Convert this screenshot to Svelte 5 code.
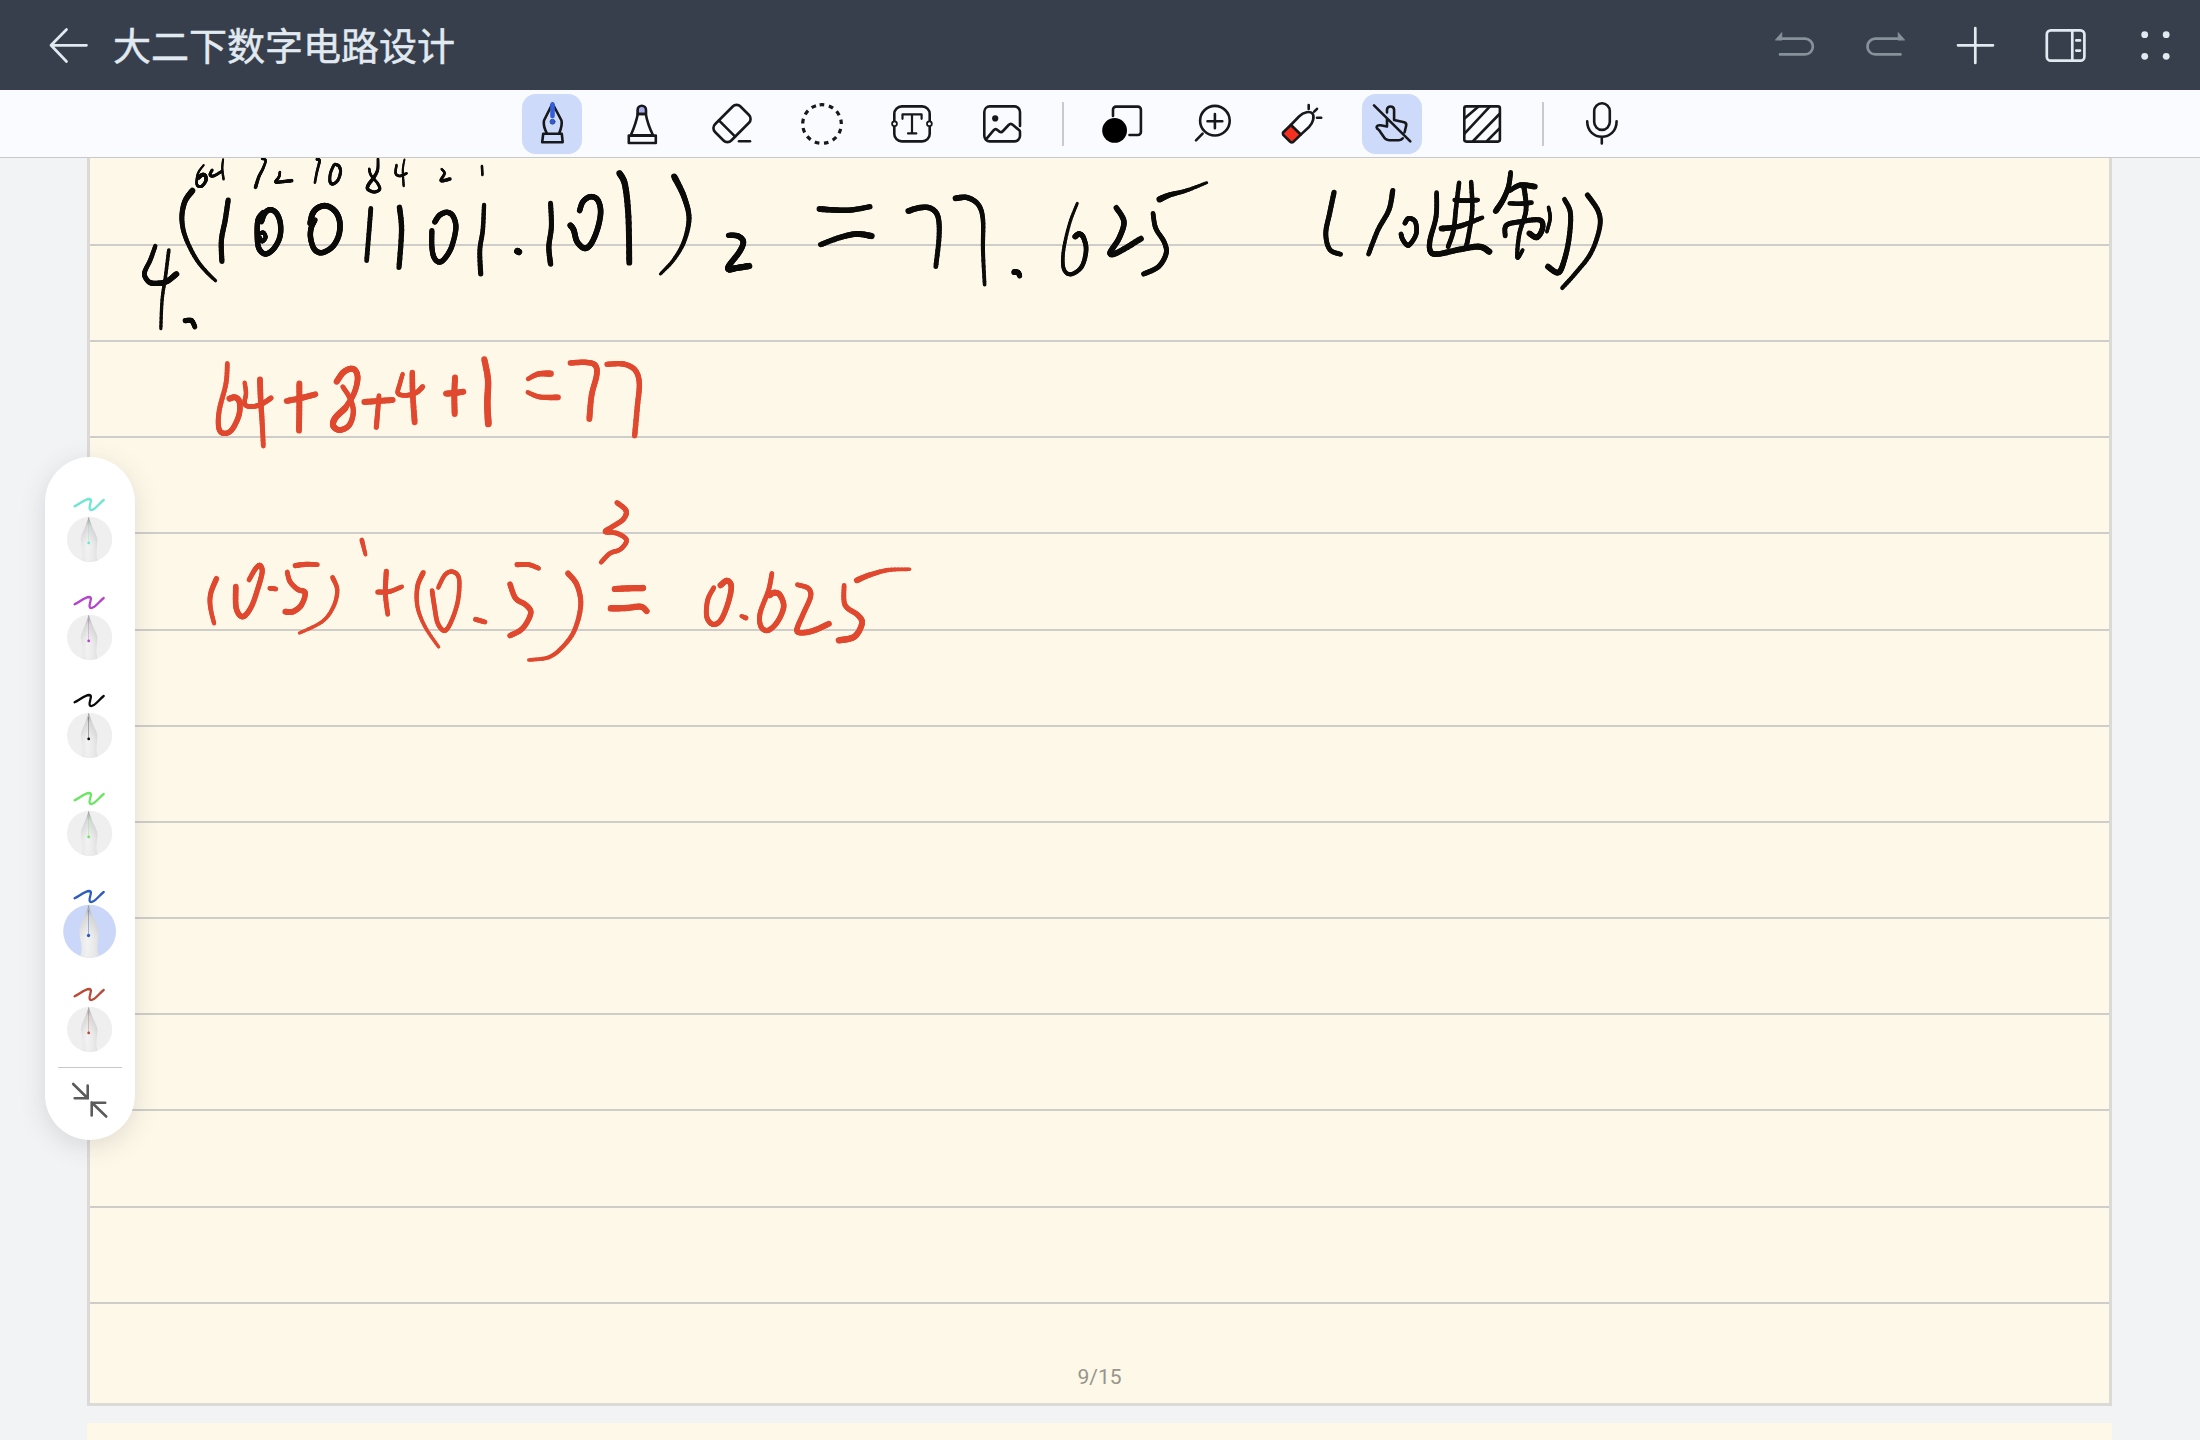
<script>
  // Pen strokes captured per writing block: origin, sampling scale, and for each
  // stroke "startWidth endWidth | x,y x,y ...".
  const blocks = [
    {
      ox: 120, oy: 150, sx: 2.376, sy: 3, color: '#0b0b0a',
      strokes: [
        '1.6 3.4|199,45 186,68 182,95 185,108 195,108 204,92 203,78 196,74 186,84',
        '2.4 2.4|219,60 214,74 222,78 242,64',
        '1.6 2|245,28 243,55 246,88',
        '1.6 3|337,27 346,31 340,55 330,80 322,112',
        '2 3|380,66 378,80 370,96 386,95 408,92',
        '2.4 2|468,28 474,33 468,65 463,98',
        '2.4 2.6|508,45 500,70 499,95 506,102 518,90 524,65 520,48 511,43',
        '2 3|592,56 596,75 612,100 617,118 604,126 589,118 590,105 602,85',
        '3 2|602,85 612,60 613,26',
        '2 2.2|657,45 655,70 665,78 681,70',
        '1.4 2|676,28 672,60 674,108',
        '1.8 3|764,57 771,70 763,92 784,87',
        '2 2|860,48 861,75',
        '5 2.6|172,122 154,155 147,205 155,260 180,325 205,365 227,392',
        '4.4 4.4|257,150 250,210 241,270 242,334',
        '4.6 4.6|340,188 328,210 326,255 330,295 346,312 366,295 380,260 381,220 372,190 357,179 344,190 336,215',
        '3.4 3.4|333,250 341,248 346,262 338,274 332,262',
        '5 4.6|452,220 458,190 472,172 492,168 512,185 522,215 520,255 505,290 480,308 462,298 453,265 454,235 463,210',
        '4 4|596,175 592,240 586,332',
        '4.6 4.4|664,172 669,240 663,352',
        '4.6 4.4|748,216 760,195 778,187 792,200 798,235 788,290 772,325 758,336 746,322 741,290 741,242',
        '3.6 4.4|865,165 862,240 855,300 857,372',
        '5.4 5.4|944,303 948,306',
        '4.2 4.6|1023,160 1025,230 1019,290 1023,342',
        '4.6 5|1092,182 1100,155 1118,140 1135,150 1142,185 1135,235 1120,280 1104,295 1086,275 1078,240 1070,226',
        '5.4 5|1187,70 1200,105 1208,200 1210,338',
        '5.4 2.4|1317,80 1340,140 1352,205 1340,275 1315,330 1284,372',
        '4.6 5.4|1446,256 1468,258 1481,275 1472,305 1448,345 1447,358 1465,354 1495,348',
        '3.6 5|84,288 72,330 58,370 68,395 85,400 110,395 134,372',
        '3 2.6|116,300 108,380 100,450 97,536',
        '4.4 4|155,512 170,512 178,531',
      ],
    },
    {
      ox: 780, oy: 150, sx: 1.823, sy: 3, color: '#0b0b0a',
      strokes: [
        '5 4.4|72,177 100,180 130,180 164,170',
        '4.4 5.4|74,284 110,262 140,252 167,258',
        '5 4|234,183 255,173 275,175 288,200 290,260 284,350',
        '5 3|320,145 342,143 362,165 370,210 370,300 373,404',
        '5 4|427,366 434,368 437,378',
        '2.4 4.8|542,160 528,220 517,300 517,355 530,373 550,350 558,300 553,262 545,252 538,260',
        '4.6 5|613,173 627,215 618,265 602,308 615,308 658,266',
        '4 4.4|680,190 685,235 700,275 704,310 690,350 663,372',
        '5.4 2.2|692,148 710,135 740,122 778,98',
        '4.4 4|1010,127 1002,190 995,250 1002,298 1022,313',
        '4.4 4|1117,122 1110,180 1090,240 1073,312',
        '4 4|1139,220 1146,205 1158,215 1160,250 1150,280 1143,285 1135,268 1132,252',
        '4 5.4|1197,128 1196,200 1185,270 1186,305 1200,312 1240,298 1275,290 1293,305',
        '3.8 4|1238,98 1232,180 1228,240 1218,290',
        '3.8 4|1260,96 1262,180 1256,250 1251,290',
        '4 4|1230,150 1250,152 1272,150',
        '5 3.6|1206,236 1240,228 1280,203',
        '4 5|1332,67 1328,110 1318,150 1305,183',
        '4 5|1330,122 1350,105 1376,110',
        '3.6 4|1330,160 1350,161 1370,158',
        '4 4.8|1322,258 1324,226 1350,215 1385,210 1390,235 1380,262 1366,250',
        '4.4 3|1356,108 1360,180 1348,250 1344,322 1354,300',
        '3 3|1401,172 1404,205 1398,245',
        '4 5|1430,148 1441,190 1438,270 1428,340 1418,368 1400,350',
        '4.4 3.4|1472,135 1492,185 1494,235 1478,310 1450,370 1426,414',
      ],
    },
    {
      ox: 190, oy: 340, sx: 3, sy: 3, color: '#e0492f',
      strokes: [
        '4 5|112,70 108,130 88,210 86,262 100,280 125,270 147,225 148,185 135,172 118,176',
        '3.6 4.4|164,128 168,160 164,192 185,200 215,192 243,174',
        '5 4|210,118 212,180 216,240 220,318',
        '5 5|290,183 330,175 376,163',
        '5 5|328,130 328,200 327,272',
        '4 5.6|458,140 480,175 490,215 478,255 450,270 430,258 435,235 465,205',
        '4.6 5.2|465,205 490,165 502,125 500,98 485,86 460,97 440,125',
        '5 5|523,186 565,183 608,180',
        '4 4.4|567,167 563,215 559,262',
        '3.6 4.4|638,102 630,130 624,160 650,166 680,157 698,140',
        '4.6 5|667,97 668,160 674,247',
        '5 5|768,161 795,159 820,155',
        '5 5|795,112 793,165 794,222',
        '5.2 5.8|883,58 894,120 892,190 895,252',
        '3.6 5.6|1014,117 1045,102 1082,101',
        '3.6 5|1013,157 1050,171 1104,172',
        '4.6 5|1141,69 1185,67 1215,75 1220,105 1205,165 1198,237',
        '4.6 4.6|1251,73 1300,72 1335,90 1348,130 1342,200 1334,287',
      ],
    },
    {
      ox: 190, oy: 490, sx: 2.119, sy: 3, color: '#e0492f',
      strokes: [
        '4.6 3.6|56,266 44,310 43,350 51,400',
        '4 4.8|125,270 138,238 148,226 153,245 145,290 130,350 112,380 98,355 97,290',
        '4 4|169,295 182,297',
        '4 5|206,246 212,275 228,298 244,308 236,345 218,365 202,365',
        '4.4 4|223,227 245,223 270,224',
        '4 2.6|302,262 312,300 304,350 280,395 232,429',
        '4 3|364,150 372,194',
        '4.4 3.6|398,306 422,305 449,290',
        '4.4 4|416,244 414,310 419,373',
        '4.4 2.6|494,248 482,290 482,350 498,410 527,471',
        '3.6 4|526,293 540,255 556,245 570,265 568,330 555,390 540,422 525,400 518,350 513,302',
        '4.2 4|605,388 625,396',
        '4.6 4.6|678,282 690,325 712,345 722,370 705,415 678,437',
        '4.4 3.8|693,224 718,224 739,235',
        '4.8 3|801,250 820,285 828,345 815,420 790,470 760,502 718,510',
        '4.4 3.8|905,38 924,62 918,88 895,110 880,125 905,130 925,150 912,178 890,190 871,217',
        '5.2 5.4|900,297 930,295 960,294',
        '5.6 4.8|892,355 925,354 955,350 968,364',
        '4 5|1110,293 1097,330 1095,380 1108,403 1125,390 1140,340 1147,290 1138,272 1124,286',
        '3 4.4|1168,378 1178,384',
        '4 5|1233,250 1226,300 1208,370 1210,410 1225,421 1245,395 1258,350 1250,315 1238,308 1228,316',
        '4 5|1287,284 1310,295 1315,320 1300,370 1286,420 1300,428 1325,420 1354,401',
        '4 5.6|1386,286 1388,345 1415,375 1424,400 1408,440 1375,451',
        '5 2.8|1413,271 1440,255 1480,240 1525,238',
      ],
    },
  ];

  // Catmull-Rom sampling of the pen points with a linear pressure ramp.
  function sample(block, source) {
    const [widths, pts] = source.split('|');
    const [w0, w1] = widths.split(' ').map((w) => Number(w) * 1.12 + 0.25);
    const p = pts.split(' ').map((s) => {
      const [x, y] = s.split(',').map(Number);
      return [block.ox + x / block.sx, block.oy + y / block.sy];
    });
    const steps = 7;
    const out = [];
    for (let i = 0; i < p.length - 1; i++) {
      const a = p[Math.max(i - 1, 0)], b = p[i], c = p[i + 1], d = p[Math.min(i + 2, p.length - 1)];
      for (let k = 0; k < steps; k++) {
        const t = k / steps;
        out.push([0, 1].map((n) =>
          0.5 * (2 * b[n] + (c[n] - a[n]) * t + (2 * a[n] - 5 * b[n] + 4 * c[n] - d[n]) * t * t +
            (3 * b[n] - a[n] - 3 * c[n] + d[n]) * t * t * t)));
      }
    }
    out.push(p[p.length - 1]);
    return out.slice(1).map((q, i) => ({
      x1: out[i][0], y1: out[i][1], x2: q[0], y2: q[1],
      w: w0 + ((w1 - w0) * i) / (out.length - 1),
    }));
  }

  const ink = blocks.map((b) => ({ color: b.color, segments: b.strokes.flatMap((s) => sample(b, s)) }));

  const pens = [
    { color: '#6fe6d2' },
    { color: '#b544cc' },
    { color: '#0a0a0a' },
    { color: '#6be662' },
    { color: '#2c5cc0', active: true },
    { color: '#bb4a35' },
  ];
  const nib = 'M43.7 26.5C41 37 36.5 43 35.8 49C36 55 38 59 37.8 66L36.5 72H53L51.3 66C51 59 52.7 54 52.4 49C51 43 46.5 37 43.7 26.5Z';
  const rows = Array.from({ length: 12 }, (_, i) => i);
</script>

<div class="app">
  <header class="titlebar">
    <svg class="back" viewBox="0 0 60 60"><path d="M18 30.3H53.5M33.5 14.5L18 30.3L33.5 46.5" /></svg>
    <h1>大二下数字电路设计</h1>
    <div class="actions">
      <svg class="dim" viewBox="0 0 60 60">
        <path d="M13 23.7H40a7.8 7.8 0 0 1 0 15.7H15" /><path class="solid" d="M10.5 24.8L16.8 17.6V24.8Z" />
      </svg>
      <svg class="dim" viewBox="0 0 60 60">
        <path d="M47 23.7H20.3a7.8 7.8 0 0 0 0 15.7H45.5" /><path class="solid" d="M49.5 24.8L43.2 17.6V24.8Z" />
      </svg>
      <svg viewBox="0 0 60 60"><path d="M13 30.3H48M30.3 13V48" /></svg>
      <svg viewBox="0 0 60 60">
        <rect x="11.8" y="15.3" width="37.6" height="30.4" rx="4" />
        <path d="M37.3 15.3V45.7M41.3 25.4H45M41.3 35.6H45" />
      </svg>
      <svg class="dots" viewBox="0 0 60 60">
        <circle cx="19.7" cy="19.7" r="3.4" /><circle cx="41.2" cy="19.7" r="3.4" />
        <circle cx="19.7" cy="41.3" r="3.4" /><circle cx="41.2" cy="41.3" r="3.4" />
      </svg>
    </div>
  </header>

  <nav class="toolbar">
    <button class="active" aria-label="pen">
      <svg viewBox="0 0 60 60">
        <path d="M30.5 9.5L22 26.5C21 31 22.5 35 25 39.7M30.5 9.5L39.5 26.5C40.5 31 39 35 37 39.7M21.2 39.8H39.8L40.7 48.2H20.2Z" />
        <path class="nib-line" d="M30.5 10.5V22" /><circle class="nib-dot" cx="30.5" cy="27.7" r="2.5" />
      </svg>
    </button>
    <button aria-label="marker">
      <svg viewBox="0 0 60 60">
        <path class="tip" d="M25.6 20V16a4.2 4.2 0 0 1 8.4 0V20Z" />
        <path d="M25.8 20H33.8C35 27 37.5 34 41 41.3H18.8C22 34 24.500 27 25.8 20ZM16.8 41.6H43.8V49H16.8Z" />
      </svg>
    </button>
    <button aria-label="eraser">
      <svg viewBox="0 0 60 60">
        <g transform="translate(30 29.5) rotate(-45)"><rect x="-18" y="-11.5" width="36" height="23" rx="5.5" /><path d="M-7-11.5V11.5" /></g>
        <path d="M37 47.3H48" />
      </svg>
    </button>
    <button aria-label="lasso">
      <svg viewBox="0 0 60 60"><circle class="lasso" cx="30" cy="30" r="19.3" transform="rotate(-97 30 30)" /></svg>
    </button>
    <button aria-label="text">
      <svg viewBox="0 0 60 60">
        <rect x="12.3" y="12.4" width="35.4" height="35" rx="7.5" />
        <circle class="handle" cx="12.5" cy="29.7" r="2.4" /><circle class="handle" cx="47.4" cy="29.7" r="2.4" />
        <path class="thin" d="M20.5 24.8V20.4H39.6V24.8M30 20.4V39.4M26 39.4H34.3" />
      </svg>
    </button>
    <button aria-label="image">
      <svg viewBox="0 0 60 60">
        <path d="M48 32V18a5.6 5.6 0 0 0-5.6-5.6H17.8A5.6 5.6 0 0 0 12.3 18V41.8a5.6 5.6 0 0 0 5.5 5.6H42.4A5.6 5.6 0 0 0 48 41.8V37.5" />
        <path d="M14 45.3L21.5 36.3Q23.7 34 25.8 36.3L27.5 37.6Q29.3 38.8 31 37L36.6 31Q38.8 28.8 41 31L47.6 36.6" />
        <circle class="fill" cx="23.2" cy="24.4" r="3.1" />
      </svg>
    </button>
    <span class="sep"></span>
    <button aria-label="colour">
      <svg viewBox="0 0 60 60">
        <path d="M21 22V15.6a3 3 0 0 1 3-3H45.9a3 3 0 0 1 3 3V38a3 3 0 0 1-3 3H37.5" />
        <circle class="swatch" cx="22.6" cy="36.4" r="12.4" />
      </svg>
    </button>
    <button aria-label="zoom">
      <svg viewBox="0 0 60 60"><circle cx="32.9" cy="26.7" r="14.8" /><path d="M25.5 27.2H40.3M32.9 20V34.2M20.6 39.7L14 46.3" /></svg>
    </button>
    <button aria-label="laser">
      <svg viewBox="0 0 60 60">
        <path d="M18.8 31L27 22.5C32 17.5 38 17 40.5 19.5C42.8 22.5 41 29 37 33L28.8 40.6Z" />
        <path class="red" d="M18.8 31L28.8 40.6L21.3 47.9Q19.7 49 18.2 47.7L11.2 40.9Q10.2 39.5 11.3 38.2Z" />
        <path d="M36.7 11V15M45 14.8L42.2 17.7M45 23.7H49.2" />
      </svg>
    </button>
    <button class="active" aria-label="palm rejection">
      <svg viewBox="0 0 60 60">
        <path d="M25 18.5V15.5a3.6 3.6 0 0 1 7.1 0V26L42.2 28.3Q44.7 29.2 44.2 31.5L42.6 38.3M25 25V32.6L18.5 31.3Q15 31 14.6 33.2Q14.8 34.6 17 36L21.5 42.5Q23.5 46.2 27 46.2H37Q39.5 46.2 40.8 44.3M12 11.3L48.3 47.3" />
      </svg>
    </button>
    <button aria-label="background">
      <svg viewBox="0 0 60 60">
        <rect x="12.3" y="12.4" width="35.6" height="35.2" rx="2" />
        <path d="M12.8 24.3L26.2 12.7M12.3 39.8L37.7 12.7M21.2 47L47.5 20M35 47L47.5 34.3" />
      </svg>
    </button>
    <span class="sep"></span>
    <button aria-label="record">
      <svg viewBox="0 0 60 60"><rect x="22.2" y="9.3" width="15.6" height="26.6" rx="7.8" /><path d="M15.2 27.2C15.2 48 44.6 48 44.6 27.2M29.8 43V49.5" /></svg>
    </button>
  </nav>

  <main class="desk">
    <section class="page">
      <div class="rules">
        {#each rows as row (row)}<div class="rule"></div>{/each}
      </div>
      <div class="number">9/15</div>
    </section>
    <section class="next"></section>

    <svg class="ink" viewBox="0 158 2200 1282">
      {#each ink as group}
        <g stroke={group.color}>
          {#each group.segments as s}
            <line x1={s.x1} y1={s.y1} x2={s.x2} y2={s.y2} stroke-width={s.w} />
          {/each}
        </g>
      {/each}
    </svg>

    <aside class="dock">
      <div class="pens">
        {#each pens as pen, i}
          <svg class="pen" viewBox="0 0 90 77">
            <defs>
              <linearGradient id="nib{i}" x1="0" x2="1" y1="0" y2="0">
                <stop offset="0" stop-color="#dedede" /><stop offset=".4" stop-color="#efefef" />
                <stop offset=".7" stop-color="#e4e4e4" /><stop offset="1" stop-color="#d2d2d2" />
              </linearGradient>
              <linearGradient id="shade{i}" x1="0" x2="0" y1="0" y2="1">
                <stop offset="0" stop-color="#777" stop-opacity=".8" /><stop offset=".22" stop-color="#999" stop-opacity=".25" />
                <stop offset=".6" stop-color="#fff" stop-opacity=".2" /><stop offset="1" stop-color="#eee" stop-opacity=".5" />
              </linearGradient>
              <clipPath id="disc{i}"><circle cx="44.6" cy="49.3" r="22.6" /></clipPath>
            </defs>
            <path class="squiggle" stroke={pen.color} d="M29.6 16.3C35 13.5 40 9.2 44 9C49 9.2 42 18 45.5 20C49.5 21 54 13.5 58.7 10" />
            <g transform={pen.active ? 'translate(44.6 49.3) scale(1.17) translate(-44.6 -49.3)' : null}>
              <circle class={pen.active ? 'disc on' : 'disc'} cx="44.6" cy="49.3" r="22.6" />
              <g clip-path="url(#disc{i})">
                <path fill="url(#nib{i})" d={nib} />
                <path fill="url(#shade{i})" d={nib} />
              </g>
              <path class="slit" stroke={pen.color} d="M43.7 31V52" />
              <circle cx="43.7" cy="52.9" r="1.4" fill={pen.color} />
            </g>
          </svg>
        {/each}
      </div>
      <hr />
      <svg class="collapse" viewBox="0 0 60 60">
        <path d="M13.2 14L27.7 28.3M14.7 28.3H27.7V15.5M46.2 46.5L31.7 32.5M45.2 32.7H31.7V45.5" />
      </svg>
    </aside>
  </main>
</div>

<style>
  :global(body) { margin: 0; }
  .app {
    width: 2200px;
    height: 1440px;
    display: flex;
    flex-direction: column;
    overflow: hidden;
    font-family: Roboto, "Noto Sans CJK SC", sans-serif;
  }
  svg { display: block; flex: none; }

  .titlebar {
    height: 90px;
    flex: none;
    box-sizing: border-box;
    padding: 0 15px 0 33px;
    display: flex;
    align-items: center;
    background: #363f4b;
    color: #e1e9f1;
  }
  .titlebar svg {
    width: 60px;
    height: 60px;
    fill: none;
    stroke: #e1e9f1;
    stroke-width: 2.7;
    stroke-linecap: round;
    stroke-linejoin: round;
  }
  h1 {
    margin: 0 0 3px 20px;
    font: 400 38px/56px "Noto Sans CJK SC", sans-serif;
    -webkit-text-stroke: .5px #e1e9f1;
    white-space: nowrap;
  }
  .actions { margin-left: auto; display: flex; gap: 30px; }
  .titlebar .dim { stroke: #87919b; }
  .titlebar .solid { fill: #87919b; stroke-width: .8; }
  .titlebar .dots { fill: #e1e9f1; stroke: none; }

  .toolbar {
    height: 68px;
    flex: none;
    box-sizing: border-box;
    padding: 4px 0 0 522px;
    display: flex;
    align-items: flex-start;
    gap: 30px;
    background: #fafbfe;
    border-bottom: 1px solid #c9c9cb;
  }
  button {
    width: 60px;
    height: 60px;
    padding: 0;
    border: 0;
    border-radius: 14px;
    background: none;
    flex: none;
  }
  button.active { background: #cddaf9; }
  button svg {
    width: 60px;
    height: 60px;
    fill: none;
    stroke: #17181b;
    stroke-width: 2.6;
    stroke-linecap: round;
    stroke-linejoin: round;
  }
  .nib-line { stroke: #345ddb; stroke-width: 4.6; }
  .nib-dot { fill: #345ddb; stroke: #27418f; stroke-width: .8; }
  .tip { fill: #a9aeea; }
  .lasso { stroke-width: 3.2; stroke-linecap: butt; stroke-dasharray: 4.66 4.67; }
  .handle { fill: #fff; stroke-width: 1.8; }
  .thin { stroke-width: 2.2; }
  .fill { fill: #17181b; stroke: none; }
  .swatch { fill: #000; stroke: none; }
  .red { fill: #f5301f; }
  .sep { width: 2px; height: 44px; margin: 8px -2px 0 0; background: #c9cacd; flex: none; }

  .desk { position: relative; flex: 1; overflow: hidden; background: #f2f3f5; }
  .page {
    width: 2025px;
    height: 1248px;
    box-sizing: border-box;
    margin-left: 87px;
    background: #fdf8e8;
    border: solid #dcdad6;
    border-width: 0 3px 3px;
    display: flex;
    flex-direction: column;
    align-items: center;
  }
  .rules { width: 100%; display: flex; flex-direction: column; }
  .rule { height: 96.2px; box-sizing: border-box; border-bottom: 2px solid #cfcdca; }
  .rule:first-child { height: 87.8px; }
  .number { margin-top: 60px; font-size: 21px; line-height: 26px; color: #98958a; }
  .next { margin: 17px 0 0 87px; width: 2025px; height: 17px; background: #fdf8e8; }

  .ink { position: absolute; inset: 0; width: 2200px; height: 1282px; stroke-linecap: round; }

  .dock {
    position: absolute;
    left: 45px;
    top: 299px;
    width: 90px;
    height: 683px;
    box-sizing: border-box;
    padding-top: 33px;
    border-radius: 45px;
    background: #fff;
    box-shadow: 0 6px 26px rgba(60, 60, 70, .15);
    display: flex;
    flex-direction: column;
    align-items: center;
  }
  .pens { display: flex; flex-direction: column; gap: 21px; }
  .pen { width: 90px; height: 77px; overflow: visible; }
  .squiggle { fill: none; stroke-width: 2.3; stroke-linecap: round; stroke-linejoin: round; }
  .disc { fill: #efeff0; }
  .disc.on { fill: #cbd7f8; }
  .slit { stroke-width: .6; opacity: .6; }
  hr { width: 64px; height: 1px; margin: 10px 0 0; border: 0; background: #c8c8c8; flex: none; }
  .collapse {
    width: 60px;
    height: 60px;
    margin-top: 2px;
    fill: none;
    stroke: #5b5b5b;
    stroke-width: 2.6;
    stroke-linecap: round;
  }
</style>
